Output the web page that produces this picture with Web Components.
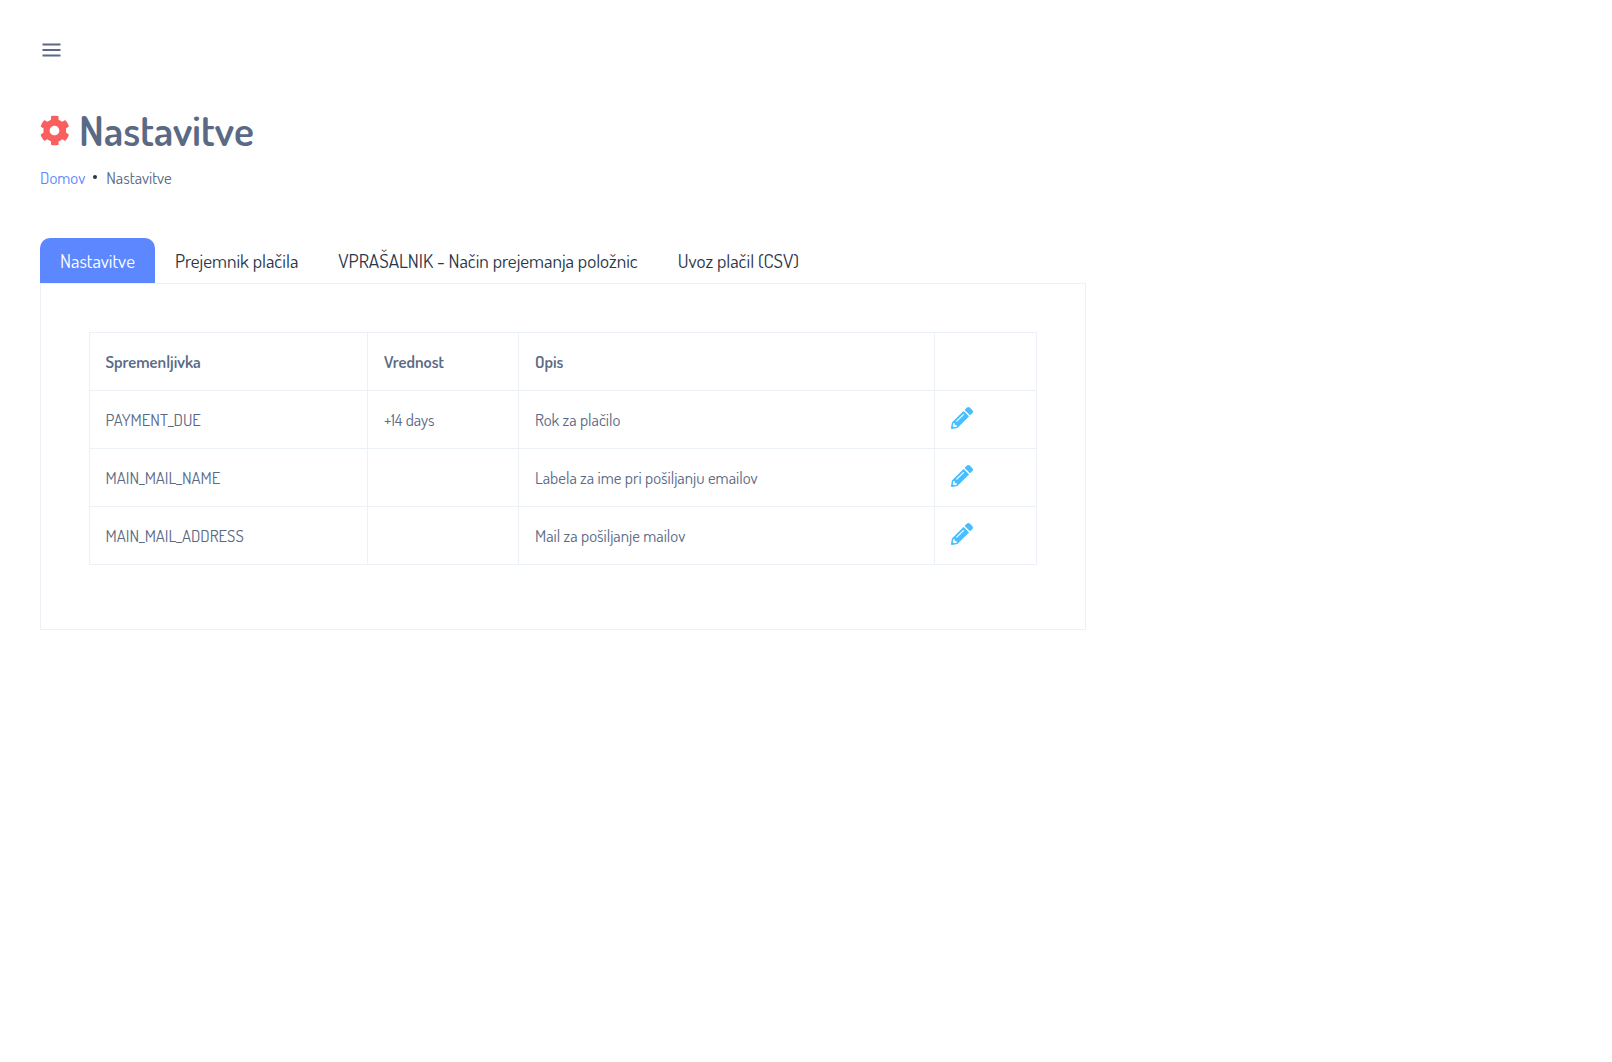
<!DOCTYPE html>
<html lang="sl">
<head>
<meta charset="utf-8">
<title>Nastavitve</title>
<style>
  html, body { margin: 0; background: #fff; }
  body { font-family: "Dosis", "Lato", sans-serif; color: #5a6a85; }
</style>
</head>
<body>
<settings-page>
  <page-title slot="title">Nastavitve</page-title>
  <bread-crumbs slot="crumbs" items="Domov,Nastavitve"></bread-crumbs>
  <tab-bar slot="tabs" items="Nastavitve|Prejemnik plačila|VPRAŠALNIK - Način prejemanja položnic|Uvoz plačil (CSV)"></tab-bar>
  <settings-table slot="panel"></settings-table>
</settings-page>

<script>
class SettingsPage extends HTMLElement {
  connectedCallback() {
    const shadow = this.attachShadow({ mode: 'open' });
    shadow.innerHTML = `
      <style>
        :host { display: block; padding: 43px 40px 0; }
        .burger { display: block; width: 22px; height: 14px; margin-left: 1px; }
        .head { margin-top: 50px; }
        .tabs { margin-top: 49px; }
        .panel {
          width: 1046px;
          box-sizing: border-box;
          height: 347px;
          padding: 48px 48px 0 48px;
          border: 1px solid #ebf1f6;
        }
      </style>
      <svg class="burger" viewBox="0 0 22 14" aria-hidden="true">
        <path d="M1.5 1.5h18M1.5 7h18M1.5 12.5h18" stroke="#5a6a85" stroke-width="2" fill="none"/>
      </svg>
      <div class="head">
        <slot name="title"></slot>
        <slot name="crumbs"></slot>
      </div>
      <div class="tabs"><slot name="tabs"></slot></div>
      <div class="panel"><slot name="panel"></slot></div>
    `;
  }
}

class PageTitle extends HTMLElement {
  connectedCallback() {
    const shadow = this.attachShadow({ mode: 'open' });
    shadow.innerHTML = `
      <style>
        :host { display: flex; align-items: center; gap: 9px; height: 46px; }
        svg { width: 31px; height: 31px; flex: none; margin-left: -1px; }
        h1 { margin: 0; font-size: 42px; font-weight: 600; line-height: 46px; color: #5a6a85; }
      </style>
      <svg viewBox="0 0 512 512" aria-hidden="true">
        <path fill="#fa5e5e" d="M487 316l-42-25c4-23 4-47 0-70l42-25c5-3 7-9 5-14-11-35-29-66-53-92-4-4-9-5-14-2l-42 24c-18-15-38-27-60-35V29c0-6-4-10-9-11-36-8-73-8-107 0-5 1-9 5-9 11v48c-22 8-42 20-60 35L96 88c-5-3-10-2-14 2-24 26-42 57-53 92-2 5 0 11 5 14l42 25c-4 23-4 47 0 70l-42 25c-5 3-7 9-5 14 11 35 29 66 53 92 4 4 9 5 14 2l42-24c18 15 38 27 60 35v48c0 6 4 10 9 11 36 8 73 8 107 0 5-1 9-5 9-11v-48c22-8 42-20 60-35l42 24c5 3 10 2 14-2 24-26 42-57 53-92 2-5 0-11-5-14zM256 336c-44 0-80-36-80-80s36-80 80-80 80 36 80 80-36 80-80 80z"/>
      </svg>
      <h1><slot></slot></h1>
    `;
  }
}

class BreadCrumbs extends HTMLElement {
  connectedCallback() {
    const shadow = this.attachShadow({ mode: 'open' });
    const items = this.getAttribute('items').split(',');
    shadow.innerHTML = `
      <style>
        :host { display: flex; align-items: center; margin-top: 12px; height: 24px; font-size: 16.8px; color: #5a6a85; }
        a { color: #5d87ff; text-decoration: none; }
        .dot { width: 4px; height: 4px; border-radius: 50%; background: #2a3547; margin: 0 9px 0 8px; }
      </style>
      <a href="#">${items[0]}</a><span class="dot"></span><span>${items[1]}</span>
    `;
  }
}

class TabBar extends HTMLElement {
  connectedCallback() {
    const shadow = this.attachShadow({ mode: 'open' });
    const items = this.getAttribute('items').split('|');
    const html = items.map((t, i) => `<a href="#" class="${i === 0 ? 'on' : ''}">${t}</a>`).join('');
    shadow.innerHTML = `
      <style>
        :host { display: flex; height: 45px; font-size: 19.2px; font-weight: 400; }
        a {
          display: flex; align-items: center; padding: 0 20px;
          color: #2a3547; text-decoration: none;
          border-radius: 10px 10px 0 0;
          white-space: nowrap;
        }
        .on { background: #5d87ff; color: #fff; }
      </style>
      ${html}
    `;
  }
}

class SettingsTable extends HTMLElement {
  connectedCallback() {
    const shadow = this.attachShadow({ mode: 'open' });
    const rows = [
      ['PAYMENT_DUE', '+14 days', 'Rok za plačilo'],
      ['MAIN_MAIL_NAME', '', 'Labela za ime pri pošiljanju emailov'],
      ['MAIN_MAIL_ADDRESS', '', 'Mail za pošiljanje mailov']
    ];
    const pencil = `<svg viewBox="0 0 512 512" aria-hidden="true"><path fill="#49beff" d="M497.9 142.1l-46.1 46.1c-4.7 4.7-12.3 4.7-17 0l-111-111c-4.7-4.7-4.7-12.3 0-17l46.1-46.1c18.7-18.7 49.1-18.7 67.9 0l60.1 60.1c18.8 18.7 18.8 49.1 0 67.9zM284.2 99.8L21.6 362.4.4 483.9c-2.9 16.4 11.4 30.6 27.8 27.8l121.5-21.3 262.6-262.6c4.7-4.7 4.7-12.3 0-17l-111-111c-4.8-4.7-12.4-4.7-17.1 0zM124.1 339.9c-5.5-5.5-5.5-14.3 0-19.8l154-154c5.5-5.5 14.3-5.5 19.8 0s5.5 14.3 0 19.8l-154 154c-5.5 5.5-14.3 5.5-19.8 0zM88 424h48v36.3l-64.5 11.3-31.1-31.1L51.7 376H88v48z"/></svg>`;
    const body = rows.map(r => `
      <tr>
        <td>${r[0]}</td><td>${r[1]}</td><td>${r[2]}</td>
        <td class="act">${pencil}</td>
      </tr>`).join('');
    shadow.innerHTML = `
      <style>
        :host { display: block; }
        table { border-collapse: collapse; width: 947px; table-layout: fixed; font-size: 16.8px; font-weight: 400; color: #5a6a85; }
        th, td { border: 1px solid #ebf1f6; height: 58px; box-sizing: border-box; padding: 0 16px; text-align: left; }
        th:first-child, td:first-child { padding-left: 15.5px; }
        th { font-weight: 600; }
        .act svg { display: block; width: 22px; height: 22px; margin-top: -4px; }
      </style>
      <table>
        <colgroup><col style="width:278px"><col style="width:151px"><col style="width:416px"><col style="width:102px"></colgroup>
        <thead><tr><th>Spremenljivka</th><th>Vrednost</th><th>Opis</th><th></th></tr></thead>
        <tbody>${body}</tbody>
      </table>
    `;
  }
}

customElements.define('settings-page', SettingsPage);
customElements.define('page-title', PageTitle);
customElements.define('bread-crumbs', BreadCrumbs);
customElements.define('tab-bar', TabBar);
customElements.define('settings-table', SettingsTable);
</script>
</body>
</html>
